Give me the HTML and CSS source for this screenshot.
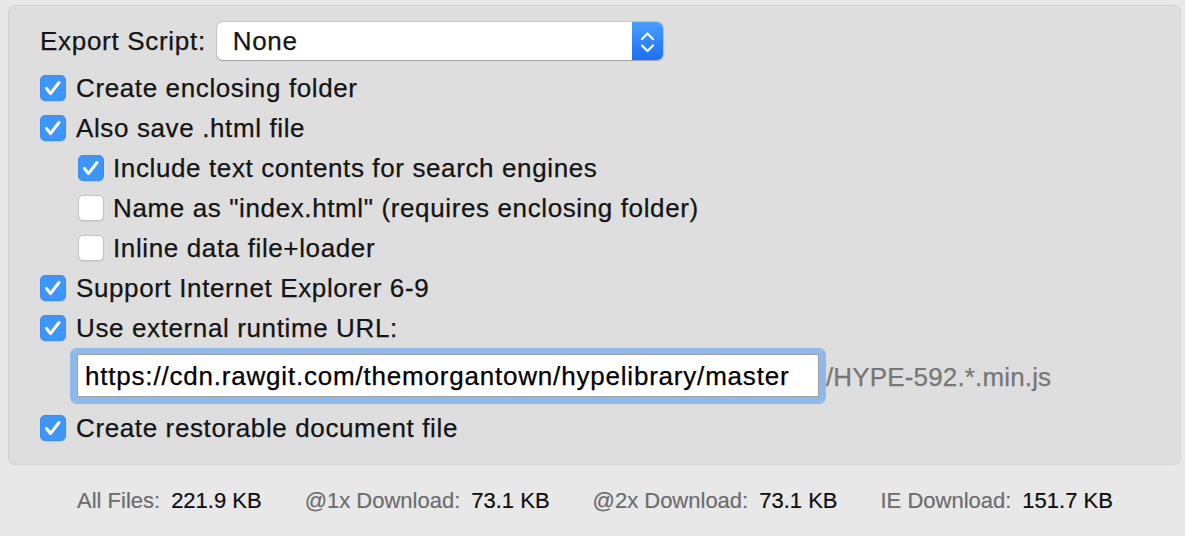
FILE: index.html
```html
<!DOCTYPE html>
<html>
<head>
<meta charset="utf-8">
<link rel="stylesheet" href="styles.css">
</head>
<body>
<div class="panel">
  <div class="row popup-row">
    <span class="label">Export Script:</span>
    <div class="popup">
      <span class="popup-value">None</span>
      <span class="popup-arrows">
        <svg width="31" height="38" viewBox="0 0 31 38"><path d="M10 17 L15.5 11.5 L21 17" fill="none" stroke="#fff" stroke-width="2.2" stroke-linecap="round" stroke-linejoin="round"/><path d="M10 23.5 L15.5 29 L21 23.5" fill="none" stroke="#fff" stroke-width="2.2" stroke-linecap="round" stroke-linejoin="round"/></svg>
      </span>
    </div>
  </div>
  <div class="row"><span class="cb on"><svg viewBox="0 0 24 24"><path d="M5.5 12.5 L9.5 17.5 L18 6.5" /></svg></span><span class="text">Create enclosing folder</span></div>
  <div class="row"><span class="cb on"><svg viewBox="0 0 24 24"><path d="M5.5 12.5 L9.5 17.5 L18 6.5" /></svg></span><span class="text">Also save .html file</span></div>
  <div class="row indent"><span class="cb on"><svg viewBox="0 0 24 24"><path d="M5.5 12.5 L9.5 17.5 L18 6.5" /></svg></span><span class="text">Include text contents for search engines</span></div>
  <div class="row indent"><span class="cb"></span><span class="text">Name as "index.html" (requires enclosing folder)</span></div>
  <div class="row indent"><span class="cb"></span><span class="text">Inline data file+loader</span></div>
  <div class="row"><span class="cb on"><svg viewBox="0 0 24 24"><path d="M5.5 12.5 L9.5 17.5 L18 6.5" /></svg></span><span class="text">Support Internet Explorer 6-9</span></div>
  <div class="row"><span class="cb on"><svg viewBox="0 0 24 24"><path d="M5.5 12.5 L9.5 17.5 L18 6.5" /></svg></span><span class="text">Use external runtime URL:</span></div>
  <div class="field-row">
    <div class="focus-ring"><div class="field">https://cdn.rawgit.com/themorgantown/hypelibrary/master</div></div>
    <span class="suffix">/HYPE-592.*.min.js</span>
  </div>
  <div class="row"><span class="cb on"><svg viewBox="0 0 24 24"><path d="M5.5 12.5 L9.5 17.5 L18 6.5" /></svg></span><span class="text">Create restorable document file</span></div>
</div>
<div class="footer">
  <span class="stat"><span class="k">All Files:</span><span class="v">221.9 KB</span></span>
  <span class="stat"><span class="k">@1x Download:</span><span class="v">73.1 KB</span></span>
  <span class="stat"><span class="k">@2x Download:</span><span class="v">73.1 KB</span></span>
  <span class="stat"><span class="k">IE Download:</span><span class="v">151.7 KB</span></span>
</div>
</body>
</html>
```

FILE: styles.css
```css
html, body {
  margin: 0;
  padding: 0;
  background: #e8e8e8;
  width: 1185px;
  height: 536px;
  overflow: hidden;
  font-family: "Liberation Sans", Arial, sans-serif;
}

.panel {
  margin: 5px 4px 0 8px;
  height: 460px;
  box-sizing: border-box;
  padding: 12px 0 0 31px;
  background: #dedede;
  border: 1px solid #d3d3d3;
  border-radius: 7px;
  display: flex;
  flex-direction: column;
  color: #141414;
  font-size: 26px;
  letter-spacing: 0.62px;
  -webkit-text-stroke: 0.25px currentColor;
}

.row {
  height: 40px;
  display: flex;
  align-items: center;
  flex-shrink: 0;
}

.popup-row {
  height: 48px;
  margin-bottom: 3px;
  margin-top: -1px;
}

.label {
  margin-right: 11px;
  letter-spacing: 0.7px;
}

.popup {
  width: 446px;
  height: 38px;
  background: #fff;
  border-radius: 6px;
  box-shadow: 0 0 0 1px rgba(0,0,0,0.10), 0 1px 1px rgba(0,0,0,0.18);
  display: flex;
  align-items: center;
  justify-content: space-between;
  overflow: hidden;
}

.popup-value {
  padding-left: 16px;
}

.popup-arrows {
  width: 31px;
  height: 38px;
  background: linear-gradient(#4a9ffb, #1c6ff4);
  display: flex;
}

.cb {
  width: 26px;
  height: 26px;
  box-sizing: border-box;
  border-radius: 5px;
  background: #fff;
  border: 1px solid #c4c4c4;
  box-shadow: 0 0.5px 1px rgba(0,0,0,0.08);
  margin-right: 10px;
  flex-shrink: 0;
  display: flex;
}

.cb.on {
  background: #3c95f8;
  border-color: #3a8ef2;
}

.cb svg {
  width: 24px;
  height: 24px;
}

.cb svg path {
  fill: none;
  stroke: #fff;
  stroke-width: 3;
  stroke-linecap: round;
  stroke-linejoin: round;
}

.indent {
  padding-left: 38px;
}

.indent .cb {
  margin-right: 9px;
}

.field-row {
  height: 60px;
  display: flex;
  align-items: flex-start;
  flex-shrink: 0;
  padding-left: 30px;
}

.focus-ring {
  width: 756px;
  height: 56px;
  box-sizing: border-box;
  padding: 6px 7px;
  background: #8fb8eb;
  border-radius: 7px;
}

.field {
  height: 43px;
  box-sizing: border-box;
  background: #fff;
  border: 1px solid #a0a0a0;
  padding-left: 7px;
  line-height: 43px;
  color: #000;
  white-space: nowrap;
  overflow: hidden;
  letter-spacing: 0.8px;
}

.suffix {
  color: #777;
  line-height: 56px;
  padding-top: 1px;
  letter-spacing: 0.15px;
}

.footer {
  display: flex;
  padding: 23px 0 0 77px;
  font-size: 22px;
  line-height: 26px;
  gap: 43px;
  -webkit-text-stroke: 0.2px currentColor;
}

.stat {
  display: flex;
  gap: 11px;
}

.k {
  color: #6d6d6d;
}

.v {
  color: #0d0d0d;
}
```
